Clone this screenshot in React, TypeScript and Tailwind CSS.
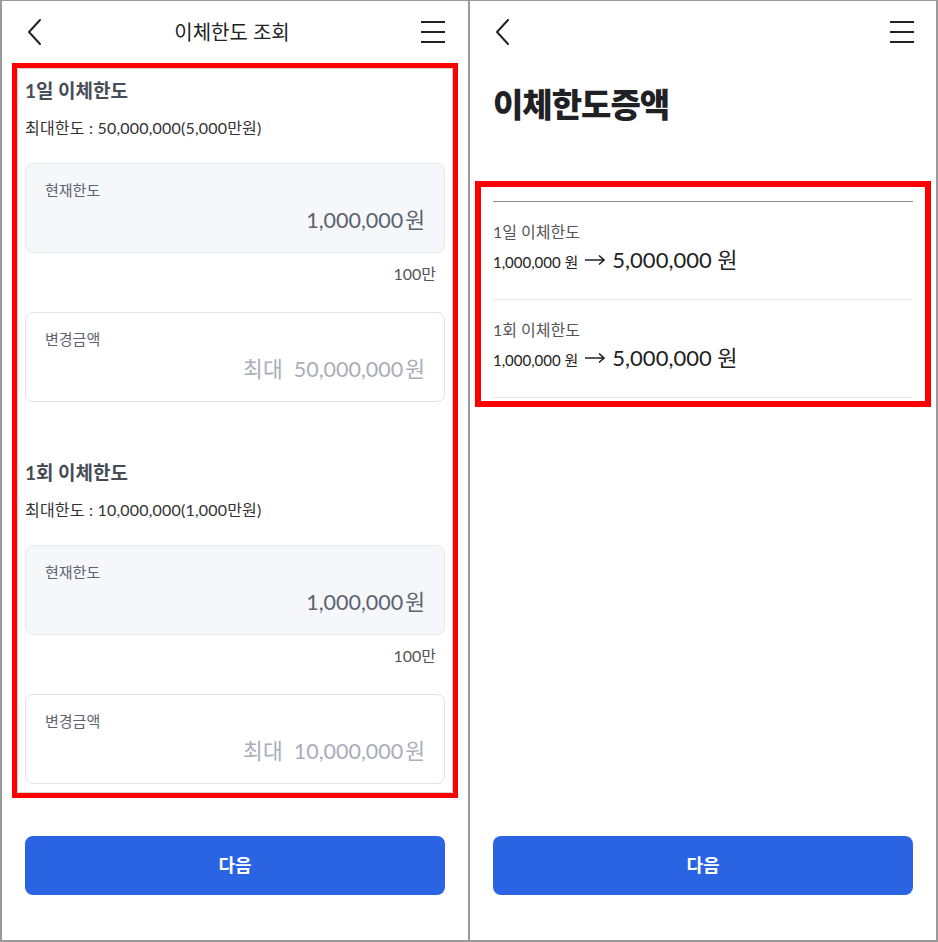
const font = { fontFamily: 'Lato, "Noto Sans CJK KR", sans-serif' };

function BackIcon() {
  return (
    <svg width="16" height="28" viewBox="0 0 16 28" fill="none">
      <path d="M13 2 L2 14 L13 26" stroke="#222" strokeWidth="2" strokeLinecap="round" strokeLinejoin="round" />
    </svg>
  );
}

function MenuIcon() {
  return (
    <svg width="24" height="22" viewBox="0 0 24 22" fill="none">
      <path d="M0 1 H24 M0 11 H24 M0 21 H24" stroke="#222" strokeWidth="2" />
    </svg>
  );
}

function ArrowIcon() {
  return (
    <svg width="20" height="12" viewBox="0 0 20 12" fill="none" className="mx-[7px] self-center">
      <path d="M0 6 H19 M14 1.5 L19 6 L14 10.5" stroke="#222" strokeWidth="1.6" />
    </svg>
  );
}

function LimitSection({ title, max, placeholder }: { title: string; max: string; placeholder: string }) {
  return (
    <div className="flex flex-col">
      <h2 className="text-[19px] leading-[26px] font-bold text-[#474d56]">{title}</h2>
      <p className="mt-[13px] text-[16px] leading-[22px] tracking-[0.2px] text-[#333]">{max}</p>
      <div className="mt-[24px] h-[90px] rounded-lg border border-[#e8eaee] bg-[#f6f7fa] px-[19px] pt-[16px]">
        <div className="text-[15px] leading-[20px] text-[#5d6470]">현재한도</div>
        <div className="mt-[6px] text-right text-[21.5px] leading-[28px] text-[#5b6370]">
          1,000,000<span className="ml-[2px]">원</span>
        </div>
      </div>
      <div className="mt-[11px] pr-[9px] text-right text-[16px] leading-[20px] text-[#555]">100만</div>
      <div className="mt-[28px] h-[90px] rounded-lg border border-[#e2e4e8] bg-white px-[19px] pt-[16px]">
        <div className="text-[15px] leading-[20px] text-[#5d6470]">변경금액</div>
        <div className="mt-[6px] text-right text-[21.5px] leading-[28px] text-[#a9aeb6]">
          최대&nbsp;&nbsp;{placeholder}<span className="ml-[2px]">원</span>
        </div>
      </div>
    </div>
  );
}

function ResultRow({ label }: { label: string }) {
  return (
    <div className="border-b border-[#e3e5e8] pt-[19px] pb-[25px]">
      <div className="text-[16px] leading-[22px] text-[#555]">{label}</div>
      <div className="mt-[3px] flex items-baseline text-[#222]">
        <span className="text-[15px]">1,000,000 원</span>
        <ArrowIcon />
        <span className="text-[22px] leading-[28px]">5,000,000 원</span>
      </div>
    </div>
  );
}

export default function App() {
  return (
    <div className="flex h-[942px] w-[938px] border-x-2 border-t border-b-2 border-[#9a9a9a] bg-white" style={font}>
      {/* left screen */}
      <div className="flex w-[466px] flex-col">
        <div className="flex h-[62px] items-center justify-between pl-[25px] pr-[23px]">
          <BackIcon />
          <h1 className="text-[20px] text-[#222]">이체한도 조회</h1>
          <MenuIcon />
        </div>
        <div className="mx-[10px] border-[5px] border-[#ff0000]">
          <div className="border border-[#d4d4d4] px-[7px] pt-[9px] pb-[8px]">
            <LimitSection title="1일 이체한도" max="최대한도 : 50,000,000(5,000만원)" placeholder="50,000,000" />
            <div className="h-[58px]" />
            <LimitSection title="1회 이체한도" max="최대한도 : 10,000,000(1,000만원)" placeholder="10,000,000" />
          </div>
        </div>
        <div className="mt-[38px] px-[23px]">
          <button className="h-[59px] w-full rounded-lg bg-[#2b64e3] text-[18px] font-bold text-white">다음</button>
        </div>
      </div>

      <div className="w-[2px] bg-[#9a9a9a]" />

      {/* right screen */}
      <div className="flex flex-1 flex-col">
        <div className="flex h-[62px] items-center justify-between pl-[25px] pr-[22px]">
          <BackIcon />
          <MenuIcon />
        </div>
        <h1 className="mt-[18px] pl-[23px] text-[33px] leading-[44px] font-black tracking-[-1px] text-[#1f2124]" style={{ fontFamily: '"Noto Sans CJK KR", sans-serif' }}>
          이체한도증액
        </h1>
        <div className="mx-[5px] mt-[56px] border-[6px] border-[#ff0000]">
          <div className="px-[12px] pt-[14px] pb-[3px]">
            <div className="border-t border-[#8a8d92]" />
            <ResultRow label="1일 이체한도" />
            <ResultRow label="1회 이체한도" />
          </div>
        </div>
        <div className="mt-auto mb-[45px] px-[23px]">
          <button className="h-[59px] w-full rounded-lg bg-[#2b64e3] text-[18px] font-bold text-white">다음</button>
        </div>
      </div>
    </div>
  );
}
